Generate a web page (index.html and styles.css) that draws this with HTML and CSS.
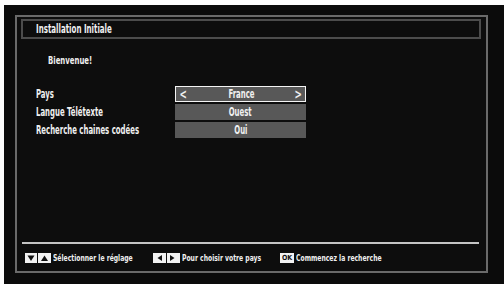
FILE: index.html
```html
<!DOCTYPE html>
<html lang="fr">
<head>
    <meta charset="UTF-8">
    <title>Installation Initiale</title>
    <link rel="stylesheet" href="styles.css">
</head>
<body>
    <div class="screen">
        <div class="frame">
            <header class="title-bar"><span class="squeeze">Installation Initiale</span></header>
            <p class="welcome"><span class="squeeze">Bienvenue!</span></p>
            <div class="settings">
                <span class="label squeeze">Pays</span>
                <div class="value selected"><span class="arrow">&lt;</span><span class="squeeze mid">France</span><span class="arrow">&gt;</span></div>
                <span class="label squeeze">Langue Télétexte</span>
                <div class="value"><span class="squeeze mid">Ouest</span></div>
                <span class="label squeeze">Recherche chaines codées</span>
                <div class="value"><span class="squeeze mid">Oui</span></div>
            </div>
            <div class="spacer"></div>
            <hr class="separator">
            <footer class="hints">
                <div class="hint">
                    <svg width="26" height="10" viewBox="0 0 26 10">
                        <rect x="0" y="0" width="12" height="10" fill="#f2f2f2"/>
                        <rect x="13" y="0" width="13" height="10" fill="#f2f2f2"/>
                        <polygon points="2.5,2.5 9.5,2.5 6,8" fill="#111"/>
                        <polygon points="16,8 23,8 19.5,2.5" fill="#111"/>
                    </svg>
                    <span class="squeeze">Sélectionner le réglage</span>
                </div>
                <div class="hint">
                    <svg width="27" height="10" viewBox="0 0 27 10">
                        <rect x="0" y="0" width="27" height="10" fill="#f2f2f2"/>
                        <rect x="13" y="0" width="1" height="10" fill="#111"/>
                        <polygon points="9,2 9,8 4.5,5" fill="#111"/>
                        <polygon points="17,2 17,8 21.5,5" fill="#111"/>
                    </svg>
                    <span class="squeeze">Pour choisir votre pays</span>
                </div>
                <div class="hint">
                    <span class="ok-key">OK</span>
                    <span class="squeeze">Commencez la recherche</span>
                </div>
            </footer>
        </div>
    </div>
</body>
</html>
```

FILE: styles.css
```css
body {
    margin: 0;
    background: #fdfdfd;
    font-family: "DejaVu Sans Condensed", "DejaVu Sans", sans-serif;
    font-weight: bold;
    color: #f0f0f0;
}
.screen {
    margin: 5px 0 0 4px;
    width: 500px;
    height: 279px;
    box-sizing: border-box;
    background: #0b0b0b;
    padding: 10px 16px 11px 11px;
}
.frame {
    height: 100%;
    box-sizing: border-box;
    border: 2px solid #6a6a6a;
    padding: 2px 5px 0 4px;
    display: flex;
    flex-direction: column;
    background: #0d0d0d;
}
/* the set's font is very narrow, squeeze the condensed face to match */
.squeeze {
    display: inline-block;
    white-space: nowrap;
    transform: scaleX(0.67);
    transform-origin: 0 50%;
}
.squeeze.mid {
    transform-origin: 50% 50%;
}
.title-bar {
    height: 20px;
    box-sizing: border-box;
    border: 2px solid #4c4c4c;
    padding-left: 13px;
    font-size: 12.5px;
    line-height: 16px;
}
.title-bar .squeeze {
    transform: scaleX(0.63);
}
.welcome {
    margin: 15px 0 0 27px;
    font-size: 11px;
    line-height: 14px;
}
.welcome .squeeze {
    transform: scaleX(0.7);
}
.settings {
    margin: 18px 0 0 15px;
    display: grid;
    grid-template-columns: 139px 131px;
    row-gap: 2px;
    font-size: 11.5px;
}
.label {
    line-height: 16px;
}
.value {
    height: 16px;
    box-sizing: border-box;
    background: #585858;
    display: flex;
    justify-content: center;
    align-items: center;
    line-height: 14px;
}
.value.selected {
    border: 1px solid #f4f4f4;
    justify-content: space-between;
    padding: 0 1px 0 2px;
}
.arrow {
    display: inline-block;
    font-size: 14px;
    transform: scaleX(0.7);
}
.spacer {
    flex: 1;
}
.separator {
    margin: 0 2px 0 1px;
    border: none;
    height: 2px;
    background: #c4c4c4;
}
.hints {
    height: 27px;
    display: grid;
    grid-template-columns: 128px 127px auto;
    align-items: center;
    padding-left: 4px;
    font-size: 9px;
}
.hint {
    display: flex;
    align-items: center;
    gap: 2px;
}
.hint .squeeze {
    transform: scaleX(0.75);
}
.hint svg {
    display: block;
    flex-shrink: 0;
}
.ok-key {
    flex-shrink: 0;
    width: 14px;
    height: 10px;
    box-sizing: border-box;
    background: #f2f2f2;
    color: #111;
    font-size: 7px;
    line-height: 10px;
    text-align: center;
}
```
